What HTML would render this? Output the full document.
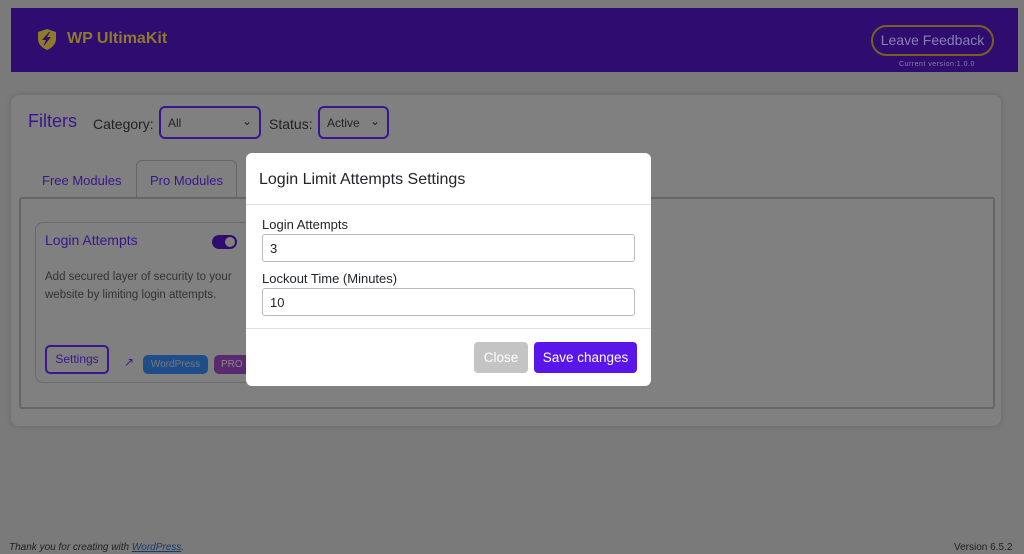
<!DOCTYPE html>
<html><head><meta charset="utf-8"><style>
*{box-sizing:border-box;margin:0;padding:0}
body{width:1024px;height:554px;overflow:hidden;background:#7a7a7b;font-family:"Liberation Sans",sans-serif;position:relative;color:#111}
.hdr{position:absolute;left:11px;top:8px;width:1007px;height:64px;background:#2e0c70}
.logo{position:absolute;left:24px;top:19px;display:flex;align-items:center;color:#8f7a2a;font-weight:bold;font-size:16px}
.fb{position:absolute;left:871px;top:25px;width:123px;height:31px;border:2px solid #7a6020;border-radius:16px;color:#8a80b0;font-size:14px;text-align:center;line-height:27px}
.ver{position:absolute;left:899px;top:61px;font-size:7px;color:#8a80b0;letter-spacing:.5px}
.panel{position:absolute;left:11px;top:95px;width:990px;height:331px;background:#808080;border-radius:8px;box-shadow:0 0 6px rgba(0,0,0,.15)}
.filters{position:absolute;left:28px;top:111px;font-size:18px;color:#3a168e}
.lab{position:absolute;font-size:14px;color:#222}
.sel{position:absolute;border:2px solid #3a168e;border-radius:6px;font-size:12px;color:#222;padding:8px 7px}
.tab{position:absolute;font-size:13px;color:#3a168e}
.box{position:absolute;left:19px;top:197px;width:976px;height:212px;border:2px solid #666;border-radius:3px}
.card{position:absolute;left:35px;top:222px;width:230px;height:161px;border:1px solid #6a6a6a;border-radius:8px;background:#808080}
.modal{position:absolute;left:246px;top:153px;width:405px;height:233px;background:#fff;border-radius:6px}
.modal h3{position:absolute;left:13px;top:18px;font-size:16px;font-weight:normal;color:#212529}
.hr{position:absolute;left:0;width:405px;height:1px;background:#dee2e6}
.ml{position:absolute;left:16px;font-size:13px;color:#212529}
.in{position:absolute;left:16px;width:373px;height:28px;border:1px solid #bbb;border-radius:3px;font-size:13px;padding:6px 7px;color:#212529}
.btn{position:absolute;top:189px;height:31px;border-radius:4px;font-size:13.5px;color:#fff;text-align:center;line-height:31px}
.foot{position:absolute;top:542px;font-size:10px;font-style:italic;color:#1e2124}
</style></head><body>
<div class="hdr">
<div class="logo"><svg width="24" height="24" viewBox="0 0 24 24"><path d="M12 2L21 5V12C21 17 17 21 12 23C7 21 3 17 3 12V5Z" fill="#8f7a2a"/><path d="M14 5L7 13H11L8 20L16 10H12L15 5Z" fill="#2e0c70"/></svg><span style="margin-left:8px">WP UltimaKit</span></div>
</div>
<div class="fb">Leave Feedback</div>
<div class="ver">Current version:1.0.0</div>
<div class="panel"></div>
<div class="filters">Filters</div>
<div class="lab" style="left:93px;top:116px">Category:</div>
<div class="sel" style="left:159px;top:106px;width:102px;height:33px">All<span style="position:absolute;right:7px;top:6px">⌄</span></div>
<div class="lab" style="left:269px;top:116px">Status:</div>
<div class="sel" style="left:318px;top:106px;width:71px;height:33px">Active<span style="position:absolute;right:7px;top:6px">⌄</span></div>
<div class="tab" style="left:42px;top:173px">Free Modules</div>
<div style="position:absolute;left:136px;top:160px;width:101px;height:39px;border:1px solid #666;border-bottom:none;border-radius:6px 6px 0 0;background:#808080"></div>
<div class="tab" style="left:150px;top:173px">Pro Modules</div>
<div class="box"></div>
<div class="card"></div>
<div style="position:absolute;left:45px;top:232px;font-size:14px;color:#3a168e">Login Attempts</div>
<div style="position:absolute;left:212px;top:235px;width:25px;height:14px;border-radius:7px;background:#2e0c70"><div style="position:absolute;right:2px;top:2px;width:10px;height:10px;border-radius:5px;background:#808080"></div></div>
<div style="position:absolute;left:45px;top:268px;font-size:11.5px;line-height:18px;color:#333;width:205px">Add secured layer of security to your website by limiting login attempts.</div>
<div style="position:absolute;left:45px;top:345px;width:64px;height:29px;border:2px solid #3a168e;border-radius:5px;font-size:12px;color:#3a168e;text-align:center;line-height:25px">Settings</div>
<div style="position:absolute;left:124px;top:355px;font-size:12px;color:#3a168e">↗</div>
<div style="position:absolute;left:143px;top:355px;width:65px;height:19px;border-radius:5px;background:#1f4d8a;color:#777;font-size:10px;text-align:center;line-height:19px">WordPress</div>
<div style="position:absolute;left:214px;top:355px;width:32px;height:19px;border-radius:5px 0 0 5px;background:#5a2a70;color:#888;font-size:10px;line-height:19px;padding-left:7px">PRO</div>
<div class="foot" style="left:9px">Thank you for creating with <span style="color:#1a3a6a;text-decoration:underline">WordPress</span>.</div>
<div class="foot" style="left:954px;font-style:normal">Version 6.5.2</div>
<div class="modal">
<h3>Login Limit Attempts Settings</h3>
<div class="hr" style="top:51px"></div>
<div class="ml" style="top:64px">Login Attempts</div>
<div class="in" style="top:81px">3</div>
<div class="ml" style="top:118px">Lockout Time (Minutes)</div>
<div class="in" style="top:135px">10</div>
<div class="hr" style="top:175px"></div>
<div class="btn" style="left:228px;width:54px;background:#c4c4c4">Close</div>
<div class="btn" style="left:288px;width:103px;background:#5a16e8">Save changes</div>
</div>
</body></html>
